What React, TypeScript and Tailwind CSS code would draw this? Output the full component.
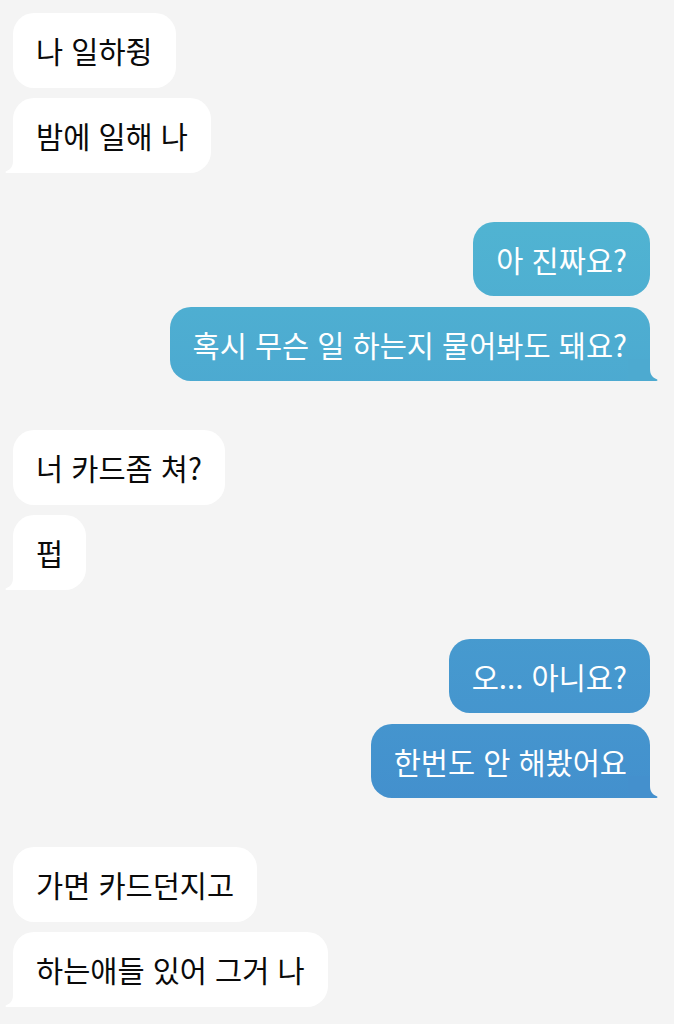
import React from 'react';

type Msg = { text: string; tail?: boolean };
type Group = { me: boolean; msgs: Msg[] };

// 대화 내용
const groups: Group[] = [
  { me: false, msgs: [{ text: '나 일하쥥' }, { text: '밤에 일해 나', tail: true }] },
  { me: true, msgs: [{ text: '아 진짜요?' }, { text: '혹시 무슨 일 하는지 물어봐도 돼요?', tail: true }] },
  { me: false, msgs: [{ text: '너 카드좀 쳐?' }, { text: '펍', tail: true }] },
  { me: true, msgs: [{ text: '오... 아니요?' }, { text: '한번도 안 해봤어요', tail: true }] },
  { me: false, msgs: [{ text: '가면 카드던지고' }, { text: '하는애들 있어 그거 나', tail: true }] },
];

function Tail({ me, color }: { me: boolean; color: string }) {
  // 말풍선 꼬리
  return (
    <svg
      width="30"
      height="22"
      viewBox="0 0 30 22"
      className={me ? 'absolute -right-[8px] bottom-0 -scale-x-100' : 'absolute -left-[8px] bottom-0'}
    >
      <path
        d="M8 0 L8 10 C8 15.5 5.5 18.5 1.2 20.3 C0 20.8 0.3 22 1.8 22 L30 22 L30 0 Z"
        fill={color}
      />
    </svg>
  );
}

function Bubble({ msg, me, tailColor }: { msg: Msg; me: boolean; tailColor: string }) {
  return (
    <div
      className={
        'relative h-[74.5px] flex items-center px-[23px] rounded-[21px] text-[29.5px] leading-[32px] [word-spacing:1.5px] whitespace-nowrap ' +
        (me
          ? 'self-end text-white bg-linear-to-b from-[#56c1d3] to-[#3f82cb] bg-fixed'
          : 'self-start text-[#0a0a0a] bg-white')
      }
    >
      {msg.tail && <Tail me={me} color={tailColor} />}
      <span className="relative">{msg.text}</span>
    </div>
  );
}

export default function App() {
  const tailColors = ['#ffffff', '#4daad0', '#ffffff', '#4490cd', '#ffffff'];
  return (
    <div
      className="min-h-screen bg-[#f4f4f4] pl-[13px] pr-[24px] pt-[13px] pb-[17px] flex flex-col"
      style={{ fontFamily: '"Noto Sans CJK KR", "Noto Sans", sans-serif' }}
    >
      {groups.map((g, i) => (
        <div key={i} className={'flex flex-col gap-[10.5px] ' + (i > 0 ? 'mt-[49px]' : '')}>
          {g.msgs.map((m, j) => (
            <Bubble key={j} msg={m} me={g.me} tailColor={tailColors[i]} />
          ))}
        </div>
      ))}
    </div>
  );
}
